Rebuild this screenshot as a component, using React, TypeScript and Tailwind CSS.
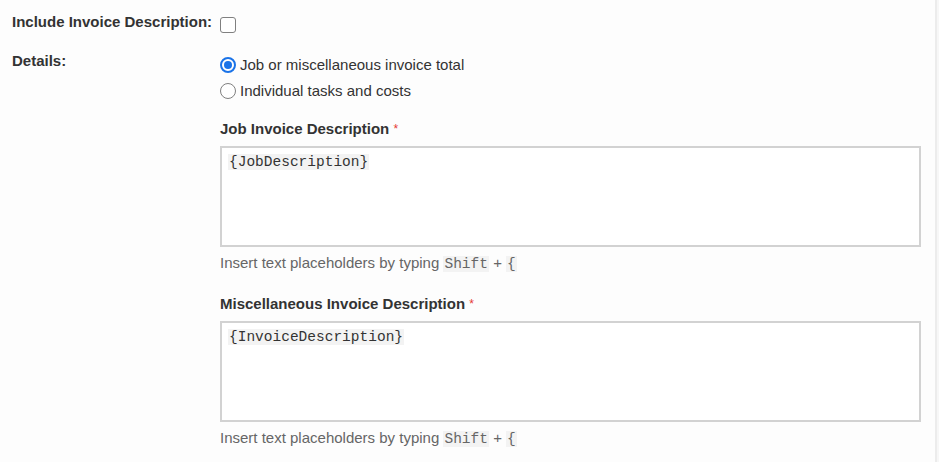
import React from "react";

const sans = "font-['Helvetica','Liberation_Sans','Arial',sans-serif]";
const mono = "font-['Liberation_Mono','Courier_New',monospace]";

function Radio({ checked }: { checked?: boolean }) {
  return checked ? (
    <span className="flex h-4 w-4 items-center justify-center rounded-full border-2 border-[#1a73e8] bg-white">
      <span className="h-2 w-2 rounded-full bg-[#1a73e8]" />
    </span>
  ) : (
    <span className="h-4 w-4 rounded-full border border-[#808080] bg-white" />
  );
}

function Code({ children }: { children: React.ReactNode }) {
  return <span className={`${mono} bg-[#f3f3f3] px-[1px] text-[14.5px] leading-4`}>{children}</span>;
}

function DescriptionField({ label, value }: { label: string; value: string }) {
  return (
    <div className="flex flex-col">
      <div className="h-5 text-[15px] font-bold leading-5 text-[#333]">
        {label} <span className="align-top text-[12px] font-normal text-[#e53935]">*</span>
      </div>
      <div className="mt-[7px] h-[101px] w-[701px] border-2 border-[#d2d2d2] bg-white px-[6px] pt-[3px] leading-5">
        <Code>{value}</Code>
      </div>
      <div className="mt-[6px] h-5 text-[15px] leading-5 text-[#666]">
        Insert text placeholders by typing <Code>Shift</Code> + <Code>{"{"}</Code>
      </div>
    </div>
  );
}

export default function App() {
  return (
    <div className={`${sans} flex h-[462px] w-[939px] bg-white text-[#333]`}>
      <div className="flex-1 bg-[#fdfdfd] pl-3">
        <div className="flex pt-[12px]">
          <div className="w-[208px] text-[15px] font-bold leading-5">Include Invoice Description:</div>
          <div className="pt-[5px]">
            <span className="block h-4 w-4 rounded-[3px] border border-[#808080] bg-white" />
          </div>
        </div>

        <div className="mt-[18px] flex">
          <div className="w-[208px] text-[15px] font-bold leading-5">Details:</div>
          <div className="flex flex-col pt-[1px]">
            <label className="flex h-[26px] items-center gap-[4px] text-[15px] leading-5">
              <Radio checked />
              Job or miscellaneous invoice total
            </label>
            <label className="flex h-[26px] items-center gap-[4px] text-[15px] leading-5">
              <Radio />
              Individual tasks and costs
            </label>
            <div className="mt-[15px] flex flex-col gap-[21px]">
              <DescriptionField label="Job Invoice Description" value="{JobDescription}" />
              <DescriptionField label="Miscellaneous Invoice Description" value="{InvoiceDescription}" />
            </div>
          </div>
        </div>
      </div>
      <div className="w-[4px] border-l-2 border-[#ececec] bg-[#f7f7f7]" />
    </div>
  );
}
